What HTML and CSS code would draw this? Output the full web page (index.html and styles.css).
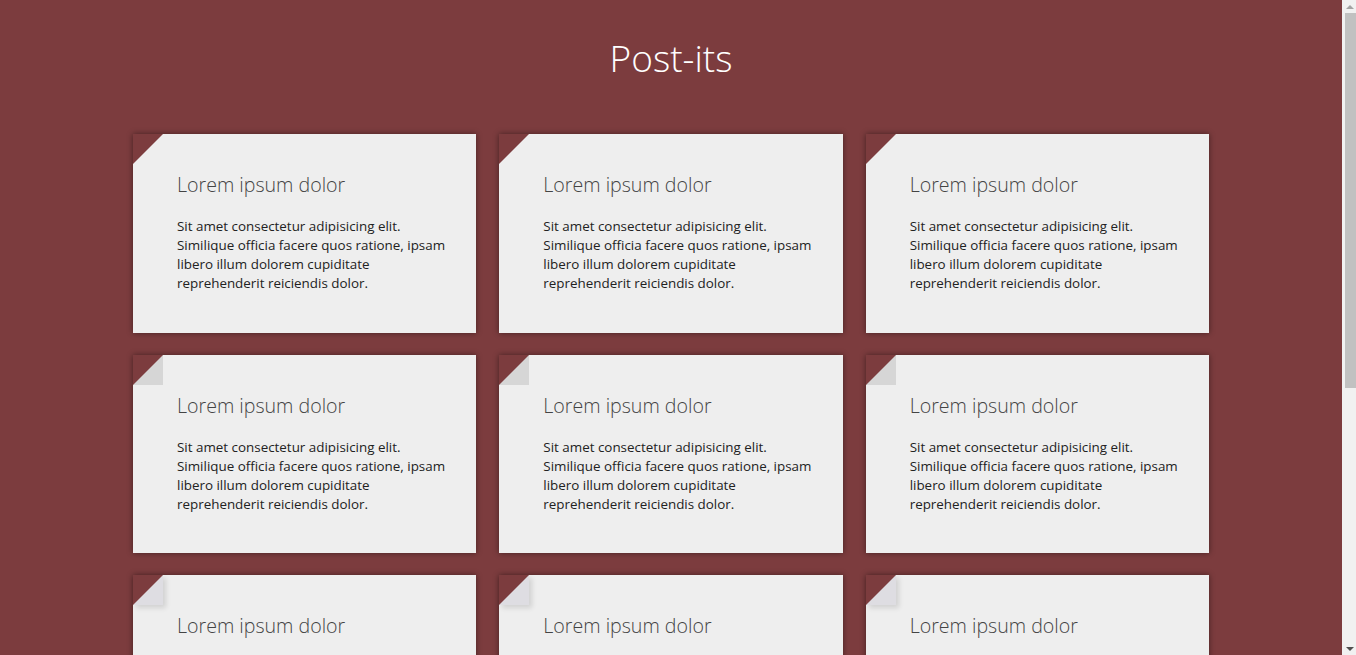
FILE: index.html
```html
<!DOCTYPE html>
<html lang="en">
<head>
<meta charset="utf-8">
<title>Post-its</title>
<link rel="stylesheet" href="styles.css">
</head>
<body>
<div class="page">
<h1 class="page-title">Post-its</h1>
<main class="board">
  <article class="note note-cut"><h2 class="note-title">Lorem ipsum dolor</h2><p class="note-text">Sit amet consectetur adipisicing elit. Similique officia facere quos ratione, ipsam libero illum dolorem cupiditate reprehenderit reiciendis dolor.</p></article>
  <article class="note note-cut"><h2 class="note-title">Lorem ipsum dolor</h2><p class="note-text">Sit amet consectetur adipisicing elit. Similique officia facere quos ratione, ipsam libero illum dolorem cupiditate reprehenderit reiciendis dolor.</p></article>
  <article class="note note-cut"><h2 class="note-title">Lorem ipsum dolor</h2><p class="note-text">Sit amet consectetur adipisicing elit. Similique officia facere quos ratione, ipsam libero illum dolorem cupiditate reprehenderit reiciendis dolor.</p></article>
  <article class="note note-fold"><h2 class="note-title">Lorem ipsum dolor</h2><p class="note-text">Sit amet consectetur adipisicing elit. Similique officia facere quos ratione, ipsam libero illum dolorem cupiditate reprehenderit reiciendis dolor.</p></article>
  <article class="note note-fold"><h2 class="note-title">Lorem ipsum dolor</h2><p class="note-text">Sit amet consectetur adipisicing elit. Similique officia facere quos ratione, ipsam libero illum dolorem cupiditate reprehenderit reiciendis dolor.</p></article>
  <article class="note note-fold"><h2 class="note-title">Lorem ipsum dolor</h2><p class="note-text">Sit amet consectetur adipisicing elit. Similique officia facere quos ratione, ipsam libero illum dolorem cupiditate reprehenderit reiciendis dolor.</p></article>
  <article class="note note-lift"><h2 class="note-title">Lorem ipsum dolor</h2><p class="note-text">Sit amet consectetur adipisicing elit. Similique officia facere quos ratione, ipsam libero illum dolorem cupiditate reprehenderit reiciendis dolor.</p></article>
  <article class="note note-lift"><h2 class="note-title">Lorem ipsum dolor</h2><p class="note-text">Sit amet consectetur adipisicing elit. Similique officia facere quos ratione, ipsam libero illum dolorem cupiditate reprehenderit reiciendis dolor.</p></article>
  <article class="note note-lift"><h2 class="note-title">Lorem ipsum dolor</h2><p class="note-text">Sit amet consectetur adipisicing elit. Similique officia facere quos ratione, ipsam libero illum dolorem cupiditate reprehenderit reiciendis dolor.</p></article>
  <article class="note note-lift"><h2 class="note-title">Lorem ipsum dolor</h2><p class="note-text">Sit amet consectetur adipisicing elit. Similique officia facere quos ratione, ipsam libero illum dolorem cupiditate reprehenderit reiciendis dolor.</p></article>
  <article class="note note-lift"><h2 class="note-title">Lorem ipsum dolor</h2><p class="note-text">Sit amet consectetur adipisicing elit. Similique officia facere quos ratione, ipsam libero illum dolorem cupiditate reprehenderit reiciendis dolor.</p></article>
  <article class="note note-lift"><h2 class="note-title">Lorem ipsum dolor</h2><p class="note-text">Sit amet consectetur adipisicing elit. Similique officia facere quos ratione, ipsam libero illum dolorem cupiditate reprehenderit reiciendis dolor.</p></article>
</main>
</div>
<div class="scrollbar" aria-hidden="true">
  <span class="scroll-arrow scroll-up"></span>
  <span class="scroll-thumb"></span>
  <span class="scroll-track"></span>
  <span class="scroll-arrow scroll-down"></span>
</div>
</body>
</html>
```
FILE: styles.css
```css
html, body {
  margin: 0;
  padding: 0;
}
body {
  background: #7c3c3e;
  font-family: "Open Sans", "Noto Sans", sans-serif;
  color: #222;
}
.page {
  margin-right: 14px;
  padding-bottom: 100px;
}
.page-title {
  margin: 0;
  padding: 31px 0 0;
  text-align: center;
  font-size: 37px;
  font-weight: 300;
  line-height: 54px;
  color: #fff;
}
.board {
  width: 1076px;
  margin: 49px auto 0;
  display: grid;
  grid-template-columns: repeat(3, 1fr);
  column-gap: 23px;
  row-gap: 22px;
}
.note {
  position: relative;
  background: #eeeeee;
  height: 198.5px;
  box-sizing: border-box;
  padding: 38px 28px 0 44px;
  box-shadow: 0 0 6px rgba(0, 0, 0, 0.45);
}
.note::before {
  content: "";
  position: absolute;
  top: 0;
  left: 0;
  width: 0;
  height: 0;
  border-style: solid;
  border-width: 15px;
  border-color: #7c3c3e #eeeeee #eeeeee #7c3c3e;
}
.note-fold::before {
  border-color: #7c3c3e #d6d6d6 #d6d6d6 #7c3c3e;
}
.note-lift::before {
  border-color: #7c3c3e #dedde2 #dedde2 #7c3c3e;
  box-shadow: 3px 3px 5px rgba(0, 0, 0, 0.12);
}
.note-title {
  margin: 0 0 19px;
  font-size: 19.6px;
  font-weight: 300;
  line-height: 26px;
  color: #444;
}
.note-text {
  margin: 0;
  font-size: 13.4px;
  line-height: 19px;
  color: #222;
}

/* fake window scrollbar */
.scrollbar {
  position: fixed;
  top: 0;
  right: 0;
  bottom: 0;
  width: 13px;
  border-left: 1px solid #f1f1f1;
  background: #f1f1f1;
  display: flex;
  flex-direction: column;
  align-items: center;
}
.scroll-arrow {
  flex: 0 0 13px;
  width: 13px;
  display: flex;
  align-items: center;
  justify-content: center;
}
.scroll-arrow::after {
  content: "";
  width: 0;
  height: 0;
  border-left: 4px solid transparent;
  border-right: 4px solid transparent;
}
.scroll-up::after {
  border-bottom: 4px solid #a3a3a3;
}
.scroll-down::after {
  border-top: 4px solid #505050;
}
.scroll-thumb {
  flex: 0 0 375px;
  width: 11px;
  margin-left: 2px;
  background: #c1c1c1;
}
.scroll-track {
  flex: 1;
}
```
